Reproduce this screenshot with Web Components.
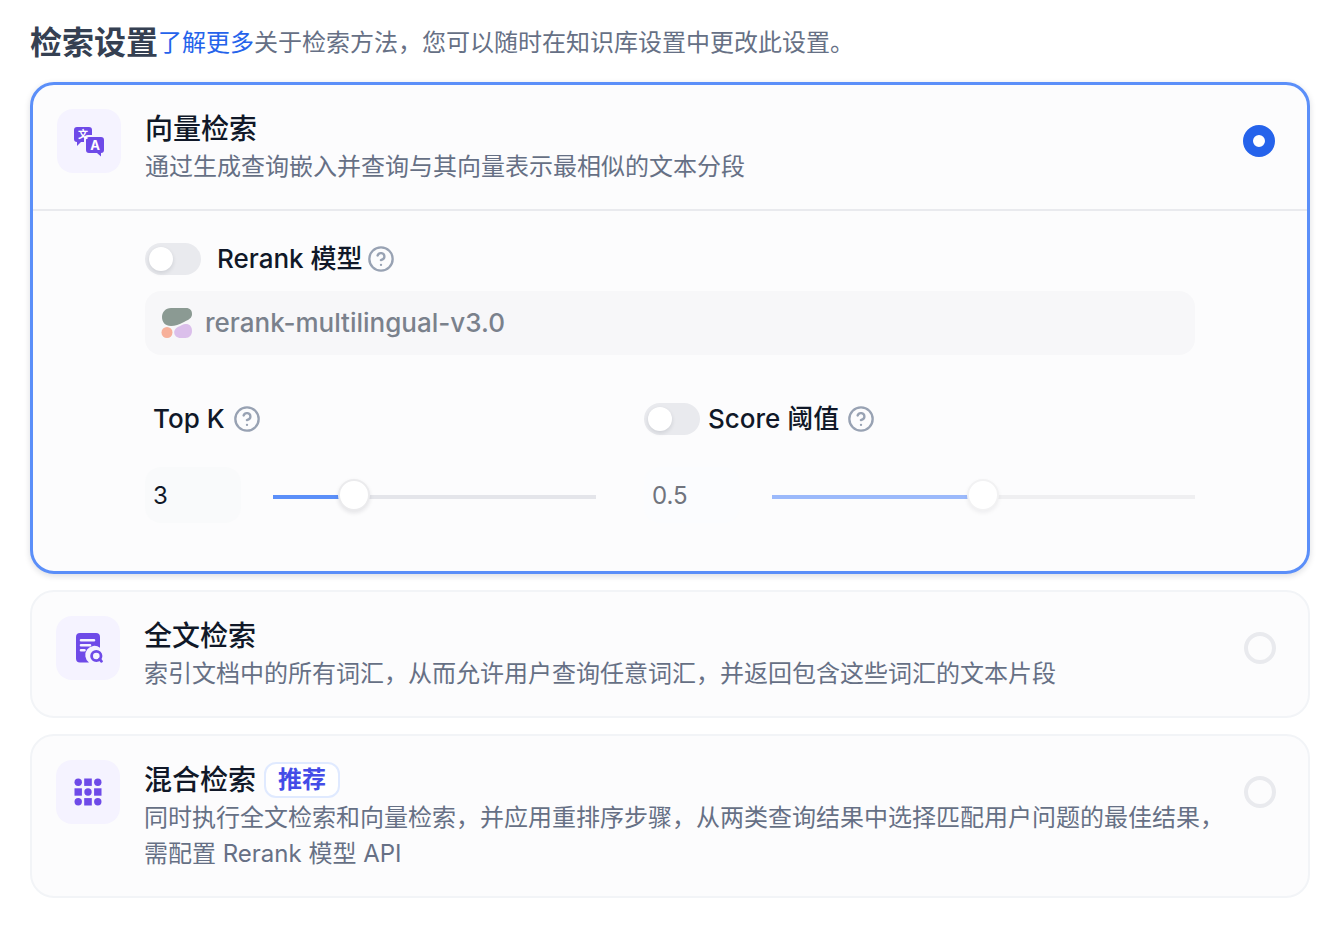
<!DOCTYPE html>
<html lang="zh-CN">
<head>
<meta charset="UTF-8">
<meta name="viewport" content="width=device-width, initial-scale=1">
<title>检索设置</title>
<style>
  :root {
    --color-title: #101828;
    --color-text: #667085;
    --color-primary: #2563eb;
    --color-active: #5b8ff9;
    --color-card: #fcfcfd;
    --color-line: #f2f4f7;
    --color-track: #e9eaee;
    --color-purple: #6e4ae8;
  }

  body {
    margin: 0;
    background: #fff;
    color: var(--color-title);
    font-family: Inter, "Noto Sans CJK SC", sans-serif;
    font-size: 24px;
    line-height: 36px;
  }
</style>
</head>
<body>
<retrieval-settings></retrieval-settings>

<script>
const icons = {
  vector: `
    <path d="M4 2H16a3 3 0 0 1 3 3V10H15a4 4 0 0 0-4 4V17H8L4 21V17a3 3 0 0 1-3-3V5a3 3 0 0 1 3-3Z"/>
    <path d="M16 12H28a3 3 0 0 1 3 3V25a3 3 0 0 1-3 3V31.500L24 28H16a3 3 0 0 1-3-3V15a3 3 0 0 1 3-3Z"/>
    <text x="10" y="13" font-size="10">文</text>
    <text x="22" y="25" font-size="13">A</text>`,
  fulltext: `
    <path fill-rule="evenodd" d="M8 1H24a4 4 0 0 1 4 4V15.700A9 9 0 0 0 17 30.500H8a4 4 0 0 1-4-4V5a4 4 0 0 1 4-4ZM9 7a1 1 0 0 0 0 2.600H22a1 1 0 0 0 0-2.600ZM9 12a1 1 0 0 0 0 2.600H18a1 1 0 0 0 0-2.600ZM9 17a1 1 0 0 0 0 2.600H12.500a1 1 0 0 0 0-2.600Z"/>
    <circle cx="24.300" cy="24" r="4.700" fill="none" stroke="currentColor" stroke-width="2.800"/>
    <path d="M27.500 27L29.500 29.300" stroke="currentColor" stroke-width="2.800" stroke-linecap="round"/>`,
  hybrid: `
    <circle cx="6.200" cy="6.200" r="3.700"/><rect x="12.200" y="2.500" width="7.600" height="7.400"/><circle cx="25.800" cy="6.200" r="3.700"/>
    <rect x="2.500" y="12.300" width="7.400" height="7.400"/><circle cx="16" cy="16" r="3.700"/><rect x="22.100" y="12.300" width="7.400" height="7.400"/>
    <circle cx="6.200" cy="25.800" r="3.700"/><rect x="12.200" y="22.100" width="7.600" height="7.400"/><circle cx="25.800" cy="25.800" r="3.700"/>`
};

// Tooltip trigger with a question mark in a circle
class HelpTip extends HTMLElement {
  constructor() {
    super();
    this.attachShadow({ mode: 'open' });
    this.shadowRoot.innerHTML = `
      <style>
        :host {
          display: flex;
        }

        button {
          display: flex;
          padding: 0;
          border: 0;
          background: none;
          color: #98a2b3;
          cursor: pointer;
        }
      </style>
      <button type="button" aria-label="${this.getAttribute('label')}">
        <svg width="28" height="28" viewBox="0 0 24 24" fill="none" stroke="currentColor" stroke-width="2" stroke-linecap="round" stroke-linejoin="round">
          <circle cx="12" cy="12" r="10"/>
          <path d="M9.090 9a3 3 0 0 1 5.830 1c0 2-3 3-3 3M12 17h.010"/>
        </svg>
      </button>
    `;
  }
}

class ToggleSwitch extends HTMLElement {
  constructor() {
    super();
    this.attachShadow({ mode: 'open' });
    this.shadowRoot.innerHTML = `
      <style>
        :host {
          display: block;
          font-size: 26px;
          font-weight: 500;
        }

        label {
          display: flex;
          align-items: center;
          gap: var(--switch-gap, 8px);
          line-height: 32px;
          cursor: pointer;
        }

        input {
          appearance: none;
          flex: none;
          width: 56px;
          height: 32px;
          margin: 0;
          padding: 4px;
          box-sizing: border-box;
          border-radius: 16px;
          background: var(--color-track);
          cursor: pointer;
        }

        input::before {
          content: '';
          display: block;
          width: 24px;
          height: 24px;
          border-radius: 50%;
          background: #fff;
          box-shadow: 0 2px 4px rgba(16, 24, 40, 0.12);
        }

        input:checked {
          background: var(--color-primary);
        }

        input:checked::before {
          margin-left: auto;
        }
      </style>
      <label><input type="checkbox" role="switch"><span><slot></slot></span></label>
    `;
  }
}

// Number box and slider that share one value
class NumberSlider extends HTMLElement {
  constructor() {
    super();
    this.attachShadow({ mode: 'open' });
  }

  connectedCallback() {
    const { min, max, step, value, label } = this.dataset;
    const disabled = this.hasAttribute('disabled') ? 'disabled' : '';

    this.shadowRoot.innerHTML = `
      <style>
        :host {
          display: flex;
          align-items: center;
          gap: 32px;
        }

        input {
          margin: 0;
          box-sizing: border-box;
        }

        input[type=text] {
          flex: none;
          width: 96px;
          height: 56px;
          padding: 0 8px;
          border: 0;
          border-radius: 16px;
          background: #f9fafb;
          color: var(--color-title);
          font: inherit;
        }

        input[type=range] {
          appearance: none;
          flex: 1;
          min-width: 0;
          height: 32px;
          background: none;
        }

        input[type=range]::-webkit-slider-runnable-track {
          height: 32px;
          background: linear-gradient(to right, var(--color-active) var(--fill), #e4e5ea var(--fill)) 0 16px / 100% 4px no-repeat;
        }

        input[type=range]::-webkit-slider-thumb {
          appearance: none;
          width: 32px;
          height: 32px;
          box-sizing: border-box;
          border: 2px solid #ebebed;
          border-radius: 50%;
          background: #fff;
          box-shadow: 0 2px 4px rgba(16, 24, 40, 0.1);
        }

        input[type=text]:disabled {
          background: #fbfcfe;
          color: #70747d;
        }

        input[type=range]:disabled::-webkit-slider-runnable-track {
          background-image: linear-gradient(to right, #9bb9fb var(--fill), #efeff1 var(--fill));
        }

        input[type=range]:disabled::-webkit-slider-thumb {
          border-color: #f2f2f3;
          box-shadow: 0 2px 4px rgba(16, 24, 40, 0.06);
        }
      </style>
      <input type="text" inputmode="decimal" aria-label="${label}" value="${value}" ${disabled}>
      <input type="range" aria-label="${label}" min="${min}" max="${max}" step="${step}" value="${value}" ${disabled}>
    `;

    const [box, range] = this.shadowRoot.querySelectorAll('input');
    const paint = () => {
      range.style.setProperty('--fill', `${(range.value - min) / (max - min) * 100}%`);
    };

    range.addEventListener('input', () => {
      box.value = range.value;
      paint();
    });
    box.addEventListener('change', () => {
      range.value = box.value;
      box.value = range.value;
      paint();
    });
    paint();
  }
}

class ModelSelect extends HTMLElement {
  constructor() {
    super();
    this.attachShadow({ mode: 'open' });
    this.shadowRoot.innerHTML = `
      <style>
        :host {
          display: flex;
          align-items: center;
          gap: 12px;
          height: 64px;
          padding: 0 16px;
          border-radius: 16px;
          background: #f7f7f9;
        }

        svg {
          flex: none;
        }

        select {
          appearance: none;
          flex: 1;
          min-width: 0;
          padding: 0;
          border: 0;
          background: none;
          color: #7a818c;
          font: inherit;
          font-size: 26px;
          font-weight: 500;
          opacity: 1;
        }
      </style>
      <svg width="32" height="32" viewBox="0 0 32 32" aria-hidden="true">
        <path fill="#8b9a93" d="M10 1H25C29 1 31 3.500 31 7C31 11 28 12.500 23 15C18 17.500 14 19 10 19C4 19 1 15 1 10C1 5 4.500 1 10 1Z"/>
        <circle cx="6" cy="25.500" r="5.500" fill="#f7b09a"/>
        <path fill="#dbbfeb" d="M20 18.500C23 17 25 16.700 27 17.200C30 18.200 31 21 31 24C31 28 28.500 31 24.500 31H19.500C16 31 13.200 28.500 13.200 25.500C13.200 22 16 20.200 20 18.500Z"/>
      </svg>
      <select aria-label="Rerank 模型" disabled>
        <option>rerank-multilingual-v3.0</option>
      </select>
    `;
  }
}

class RetrievalOption extends HTMLElement {
  constructor() {
    super();
    this.attachShadow({ mode: 'open' });
  }

  connectedCallback() {
    const active = this.hasAttribute('active');

    this.shadowRoot.innerHTML = `
      <style>
        :host {
          display: block;
          border: 2px solid var(--color-line);
          border-radius: 24px;
          background: var(--color-card);
        }

        :host([active]) {
          border: 3px solid var(--color-active);
          box-shadow: 0 2px 6px rgba(16, 24, 40, 0.14);
        }

        .head {
          display: flex;
          align-items: flex-start;
          padding: 24px 32px 24px 24px;
          cursor: pointer;
        }

        .icon {
          display: flex;
          flex: none;
          padding: 16px;
          border-radius: 16px;
          background: #f5f3ff;
          color: var(--color-purple);
        }

        .icon text {
          fill: #fff;
          font-weight: 700;
          text-anchor: middle;
        }

        .text {
          flex: 1;
          min-width: 0;
          margin: 0 16px 0 24px;
        }

        .title {
          display: flex;
          align-items: center;
          gap: 8px;
          font-size: 28px;
          font-weight: 500;
          line-height: 40px;
        }

        .desc {
          display: block;
          color: var(--color-text);
        }

        input {
          appearance: none;
          flex: none;
          width: 32px;
          height: 32px;
          margin: 16px 0 0;
          box-sizing: border-box;
          border: 4px solid var(--color-track);
          border-radius: 50%;
          cursor: pointer;
        }

        input:checked {
          border: 10px solid var(--color-primary);
          background: #fff;
        }

        .body {
          padding: 32px 112px 48px;
          border-top: 2px solid var(--color-track);
        }
      </style>
      <label class="head">
        <span class="icon">
          <svg width="32" height="32" viewBox="0 0 32 32" fill="currentColor" aria-hidden="true">${icons[this.getAttribute('icon')]}</svg>
        </span>
        <span class="text">
          <span class="title"><slot name="title"></slot><slot name="tag"></slot></span>
          <span class="desc"><slot name="desc"></slot></span>
        </span>
        <input type="radio" ${active ? 'checked' : ''}>
      </label>
      ${active ? '<div class="body"><slot></slot></div>' : ''}
    `;

    // Radios in separate shadow roots do not form a group
    this.shadowRoot.querySelector('input').addEventListener('change', () => {
      this.dispatchEvent(new CustomEvent('option-picked', { bubbles: true, composed: true }));
    });
  }

  set checked(value) {
    this.shadowRoot.querySelector('input').checked = value;
  }
}

class RetrievalSettings extends HTMLElement {
  constructor() {
    super();
    this.attachShadow({ mode: 'open' });
    this.shadowRoot.innerHTML = `
      <style>
        :host {
          display: block;
          padding: 20px 26px 48px 30px;
        }

        header {
          display: flex;
          align-items: center;
          margin-bottom: 16px;
          color: var(--color-text);
          line-height: 46px;
        }

        h1 {
          flex: none;
          margin: 0;
          color: #354052;
          font-size: 32px;
          font-weight: 700;
        }

        p {
          margin: 0;
        }

        a {
          color: var(--color-primary);
          text-decoration: none;
        }

        .options {
          display: flex;
          flex-direction: column;
          gap: 16px;
        }

        .tag {
          padding: 0 12px;
          border: 2px solid #e0eaff;
          border-radius: 12px;
          background: #fff;
          color: #444ce7;
          font-size: 24px;
          font-weight: 600;
          line-height: 32px;
        }

        .row {
          display: flex;
          align-items: center;
          gap: 8px;
          height: 32px;
        }

        .rerank {
          --switch-gap: 16px;
          gap: 4px;
          margin-bottom: 16px;
        }

        .params {
          display: grid;
          grid-template-columns: 9fr 11fr;
          gap: 48px;
          margin-top: 48px;
        }

        .params .row {
          margin-bottom: 32px;
        }

        .name {
          padding-left: 8px;
          font-size: 26px;
          font-weight: 500;
        }
      </style>

      <header>
        <h1>检索设置</h1>
        <p><a href="#learn">了解更多</a>关于检索方法，您可以随时在知识库设置中更改此设置。</p>
      </header>

      <div class="options">
        <retrieval-option icon="vector" active>
          <span slot="title">向量检索</span>
          <span slot="desc">通过生成查询嵌入并查询与其向量表示最相似的文本分段</span>

          <div class="row rerank">
            <toggle-switch>Rerank 模型</toggle-switch>
            <help-tip label="Rerank 模型说明"></help-tip>
          </div>
          <model-select></model-select>

          <div class="params">
            <div>
              <div class="row">
                <span class="name">Top K</span>
                <help-tip label="Top K 说明"></help-tip>
              </div>
              <number-slider data-label="Top K" data-min="1" data-max="10" data-step="1" data-value="3"></number-slider>
            </div>
            <div>
              <div class="row">
                <toggle-switch>Score 阈值</toggle-switch>
                <help-tip label="Score 阈值说明"></help-tip>
              </div>
              <number-slider data-label="Score 阈值" data-min="0" data-max="1" data-step="0.01" data-value="0.5" disabled></number-slider>
            </div>
          </div>
        </retrieval-option>

        <retrieval-option icon="fulltext">
          <span slot="title">全文检索</span>
          <span slot="desc">索引文档中的所有词汇，从而允许用户查询任意词汇，并返回包含这些词汇的文本片段</span>
        </retrieval-option>

        <retrieval-option icon="hybrid">
          <span slot="title">混合检索</span>
          <span slot="tag" class="tag">推荐</span>
          <span slot="desc">同时执行全文检索和向量检索，并应用重排序步骤，从两类查询结果中选择匹配用户问题的最佳结果，需配置 Rerank 模型 API</span>
        </retrieval-option>
      </div>
    `;

    this.shadowRoot.addEventListener('option-picked', (e) => {
      this.shadowRoot.querySelectorAll('retrieval-option').forEach((option) => {
        option.checked = option === e.target;
      });
    });
  }
}

customElements.define('help-tip', HelpTip);
customElements.define('toggle-switch', ToggleSwitch);
customElements.define('number-slider', NumberSlider);
customElements.define('model-select', ModelSelect);
customElements.define('retrieval-option', RetrievalOption);
customElements.define('retrieval-settings', RetrievalSettings);
</script>
</body>
</html>
